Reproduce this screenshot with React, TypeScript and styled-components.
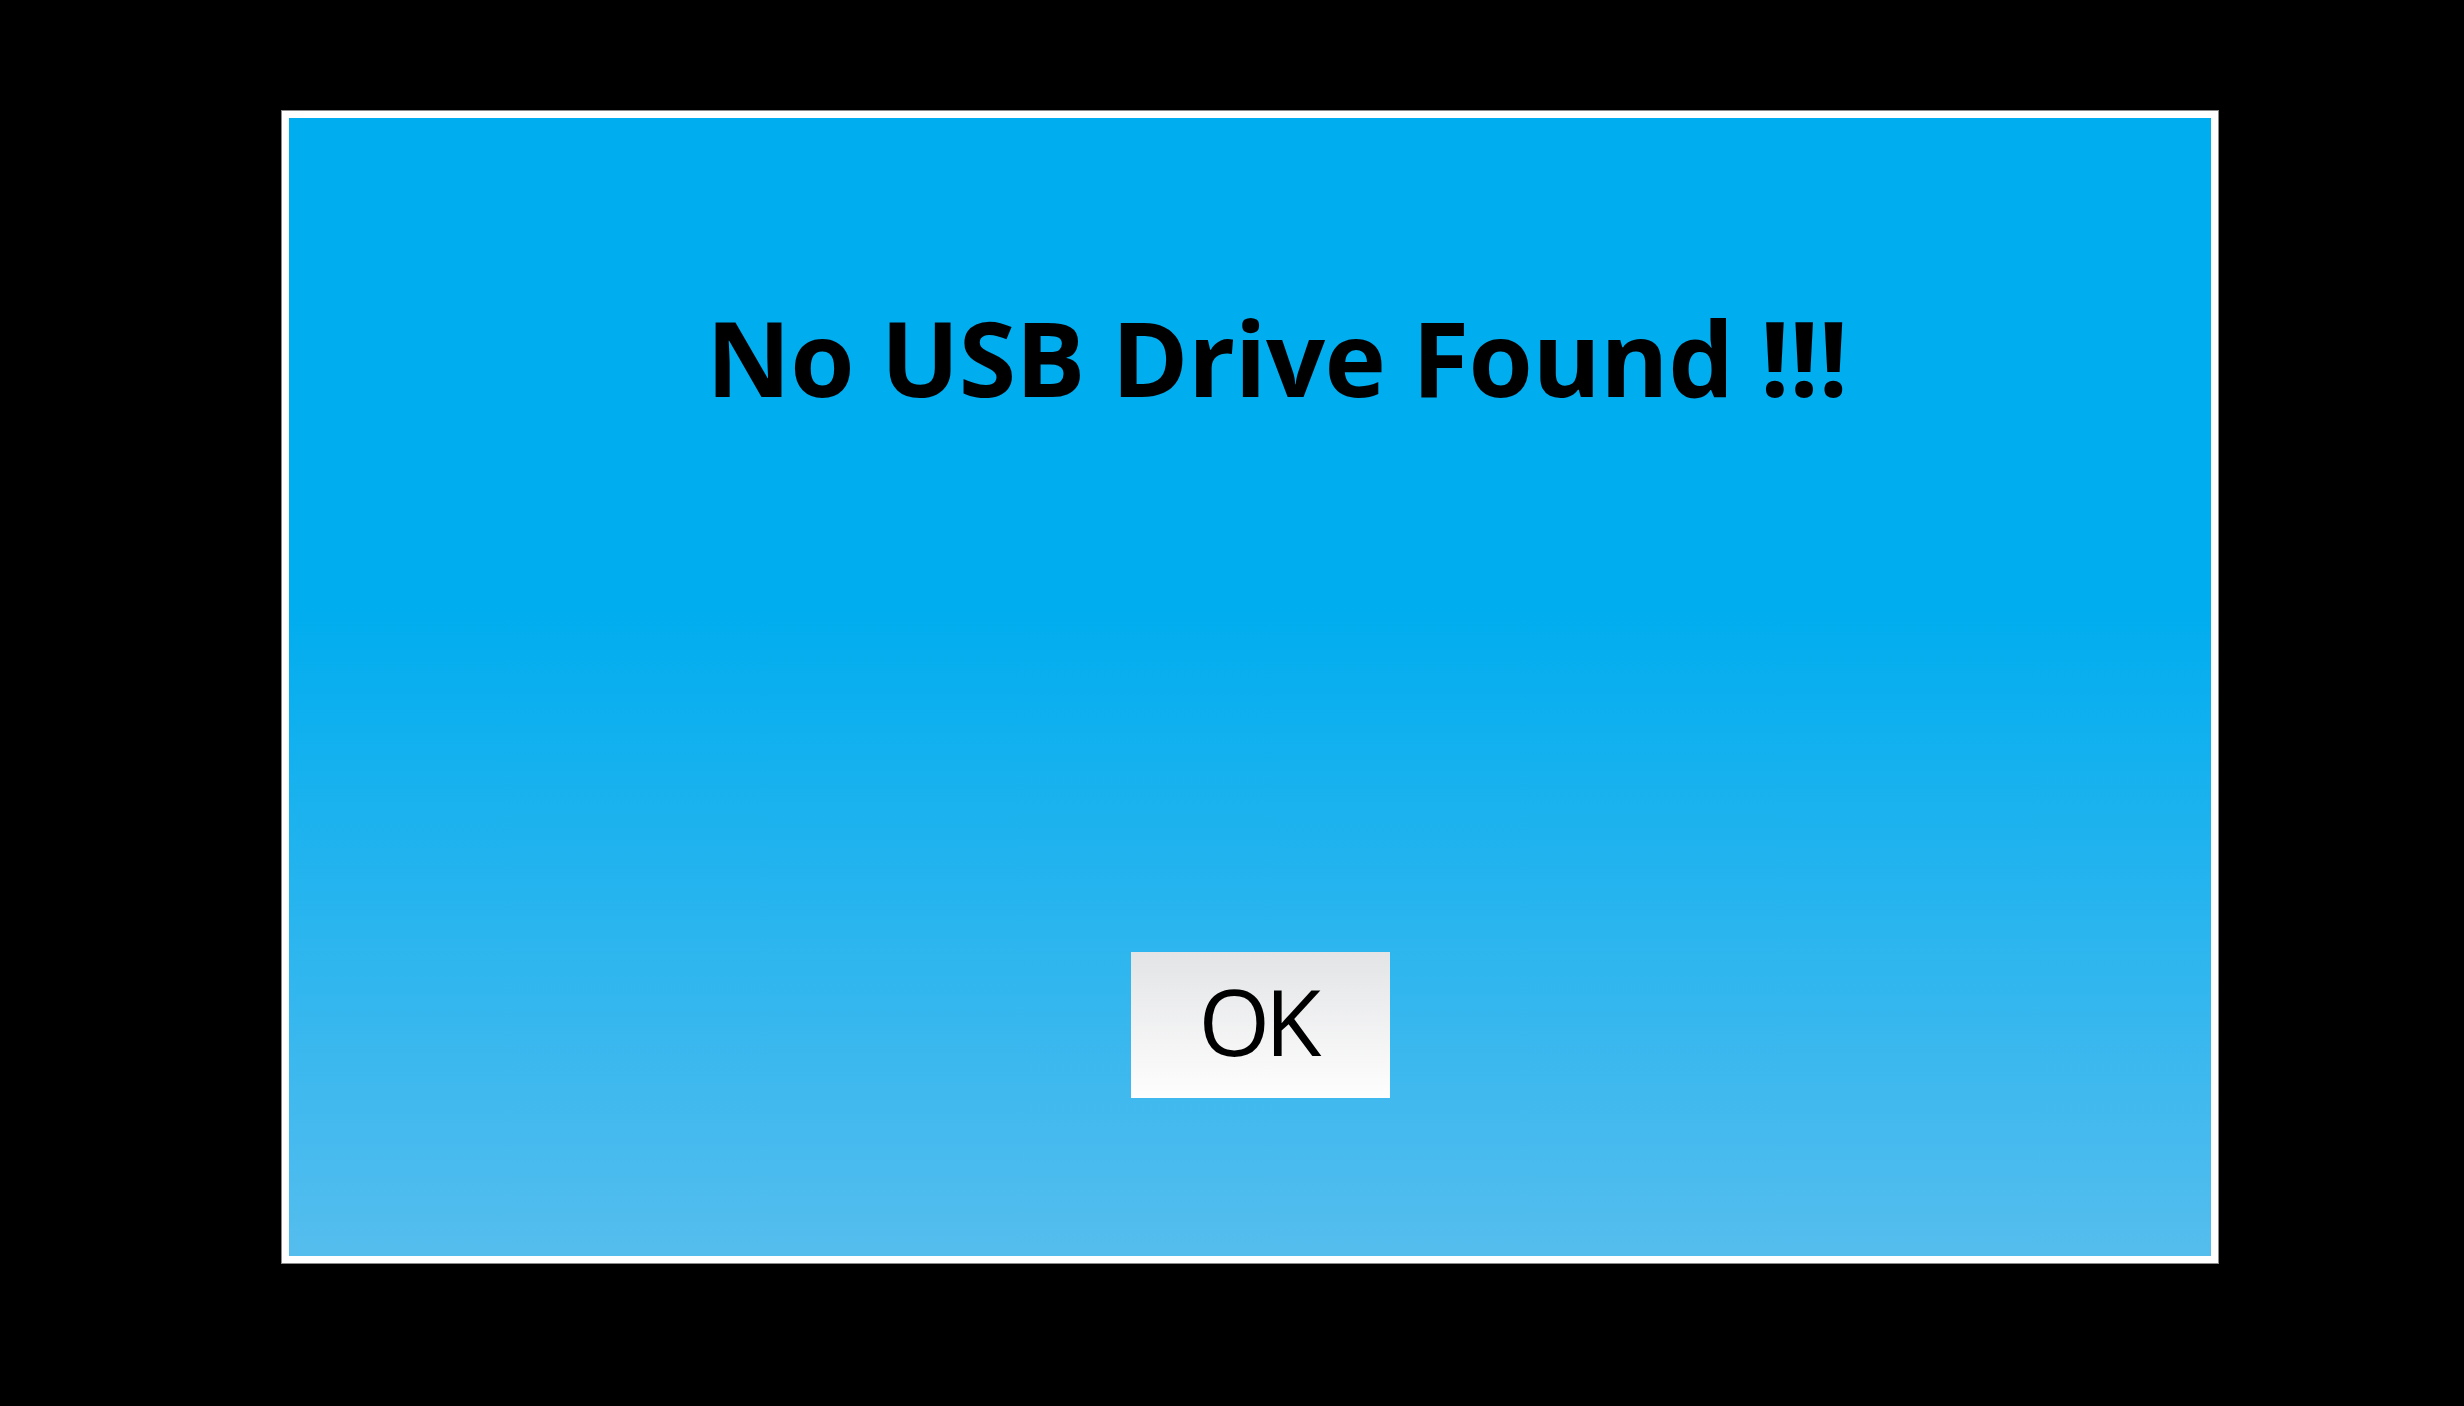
import styled, { createGlobalStyle } from "styled-components";

const GlobalStyle = createGlobalStyle`
    html, body {
        margin: 0;
        padding: 0;
        background: #000;
    }
    body {
        font-family: "Open Sans", "Noto Sans", sans-serif;
    }
`;

const Screen = styled.div`
    width: 2464px;
    height: 1406px;
    box-sizing: border-box;
    padding: 110px 0 0 281px;
    background: #000;
`;

const Dialog = styled.div`
    width: 1938px;
    height: 1154px;
    box-sizing: border-box;
    border: 8px solid #fff;
    outline: 1px solid #8a8a8a;
    outline-offset: -1px;
    background: linear-gradient(180deg, #00adef 0%, #00adef 43%, #55bdee 100%);
    display: flex;
    flex-direction: column;
    align-items: center;
    padding: 187px 0 158px;
`;

const Title = styled.h1`
    margin: 0;
    padding-left: 54px;
    font-family: "Open Sans", "Noto Sans", sans-serif;
    font-weight: 700;
    font-size: 104px;
    line-height: 104px;
    letter-spacing: -0.5px;
    color: #000;
    white-space: nowrap;
`;

const OkButton = styled.button`
    margin-top: auto;
    margin-left: 21px;
    width: 259px;
    height: 146px;
    border: none;
    padding: 0 6px 8px 0;
    box-sizing: border-box;
    background: linear-gradient(180deg, #e3e4e6 0%, #fefefe 100%);
    display: flex;
    align-items: center;
    justify-content: center;
    font-family: "Open Sans", "Noto Sans", sans-serif;
    font-weight: 400;
    font-size: 92px;
    line-height: 1;
    letter-spacing: -5px;
    color: #000;
    cursor: pointer;
`;

function App() {
    return (
        <Screen>
            <GlobalStyle />
            <Dialog>
                <Title>No USB Drive Found !!!</Title>
                <OkButton>OK</OkButton>
            </Dialog>
        </Screen>
    );
}

export default App;
